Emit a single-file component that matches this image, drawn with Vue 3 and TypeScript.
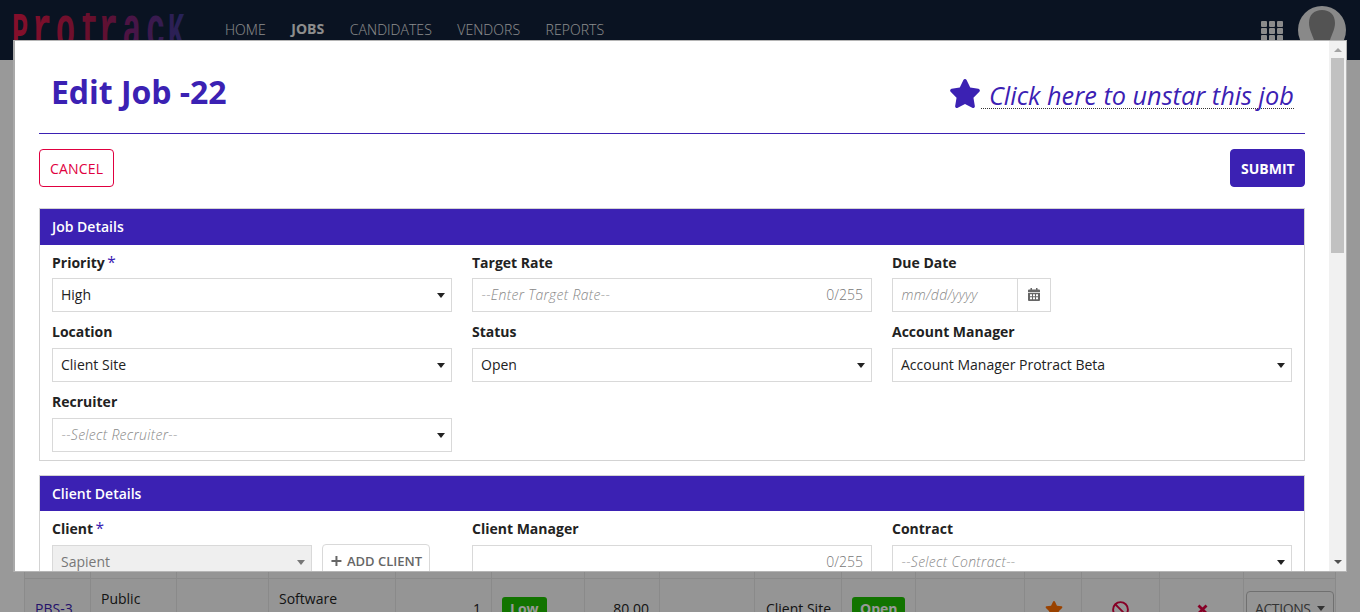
<script setup lang="ts">
interface Field {
  label: string
  kind: 'select' | 'text' | 'date' | 'client'
  value?: string
  placeholder?: string
  required?: boolean
}

interface Panel {
  title: string
  fields: Field[]
}

interface Cell {
  width: number
  kind?: 'link' | 'top' | 'right' | 'count' | 'badge' | 'star' | 'ban' | 'remove' | 'actions'
  text?: string
}

const navItems = ['HOME', 'JOBS', 'CANDIDATES', 'VENDORS', 'REPORTS']
const activeItem = 'JOBS'

const panels: Panel[] = [
  {
    title: 'Job Details',
    fields: [
      { label: 'Priority', kind: 'select', value: 'High', required: true },
      { label: 'Target Rate', kind: 'text', placeholder: '--Enter Target Rate--' },
      { label: 'Due Date', kind: 'date', placeholder: 'mm/dd/yyyy' },
      { label: 'Location', kind: 'select', value: 'Client Site' },
      { label: 'Status', kind: 'select', value: 'Open' },
      { label: 'Account Manager', kind: 'select', value: 'Account Manager Protract Beta' },
      { label: 'Recruiter', kind: 'select', placeholder: '--Select Recruiter--' },
    ],
  },
  {
    title: 'Client Details',
    fields: [
      { label: 'Client', kind: 'client', value: 'Sapient', required: true },
      { label: 'Client Manager', kind: 'text' },
      { label: 'Contract', kind: 'select', placeholder: '--Select Contract--' },
    ],
  },
]

const cells: Cell[] = [
  { width: 66, kind: 'link', text: 'PBS-3' },
  { width: 86, kind: 'top', text: 'Public' },
  { width: 92 },
  { width: 127, kind: 'top', text: 'Software' },
  { width: 96, kind: 'count', text: '1' },
  { width: 93, kind: 'badge', text: 'Low' },
  { width: 75, kind: 'right', text: '80.00' },
  { width: 95 },
  { width: 87, kind: 'right', text: 'Client Site' },
  { width: 74, kind: 'badge', text: 'Open' },
  { width: 109 },
  { width: 57, kind: 'star' },
  { width: 78, kind: 'ban' },
  { width: 84, kind: 'remove' },
  { width: 92, kind: 'actions', text: 'ACTIONS' },
]

const starPath =
  'M259.3 17.8 194 150.2 47.9 171.5c-26.2 3.8-36.7 36.1-17.7 54.6l105.7 103-25 145.5c-4.5 26.3 23.2 46 46.4 33.7L288 439.6l130.7 68.7c23.2 12.2 50.9-7.4 46.4-33.7l-25-145.5 105.7-103c19-18.5 8.500-50.8-17.7-54.6L382 150.200 316.700 17.800c-11.700-23.600-45.600-23.900-57.400 0z'
</script>

<template>
  <div class="page">
    <header class="nav">
      <svg class="logo" width="180" height="46" viewBox="0 0 180 46">
        <defs>
          <linearGradient id="logoFill" gradientUnits="userSpaceOnUse" x1="0" y1="0" x2="329" y2="0">
            <stop offset="0" stop-color="#e01a48" />
            <stop offset="0.5" stop-color="#a81a4c" />
            <stop offset="0.7" stop-color="#7a2377" />
            <stop offset="1" stop-color="#3d3a94" />
          </linearGradient>
        </defs>
        <text
          class="logo-text"
          transform="scale(0.52 1)"
          y="35"
          font-size="52"
          fill="url(#logoFill)"
          x="-2 37 82 129 165 210 256 298"
        ><tspan>P</tspan><tspan font-size="62">rotrac</tspan><tspan>K</tspan></text>
      </svg>
      <nav class="links">
        <a v-for="item in navItems" :key="item" :class="{ active: item === activeItem }">{{ item }}</a>
      </nav>
      <div class="tools">
        <span class="apps"><i v-for="n in 9" :key="n"></i></span>
        <svg width="48" height="48" viewBox="0 0 48 48">
          <circle cx="24" cy="24" r="24" fill="#e4e4e4" />
          <path d="M24 4c8 0 13 5 13 13 0 6-3 11-5 17-2 5-5 8-8 8s-6-3-8-8c-2-6-5-11-5-17C11 9 16 4 24 4z" fill="#8b8b8b" />
        </svg>
      </div>
    </header>

    <div class="table-row">
      <div
        v-for="(cell, i) in cells"
        :key="i"
        class="cell"
        :class="cell.kind"
        :style="{ width: cell.width + 'px' }"
      >
        <span v-if="cell.kind === 'badge'" class="tag">{{ cell.text }}</span>
        <svg v-else-if="cell.kind === 'star'" width="18" height="16" viewBox="0 0 576 512">
          <path :d="starPath" fill="#ff6e00" />
        </svg>
        <svg v-else-if="cell.kind === 'ban'" width="17" height="17" viewBox="0 0 17 17">
          <path d="M3 3l11 11" stroke="#e00040" stroke-width="1.8" />
          <circle cx="8.500" cy="8.500" r="7.400" fill="none" stroke="#e00040" stroke-width="1.900" />
        </svg>
        <svg v-else-if="cell.kind === 'remove'" width="11" height="11" viewBox="0 0 11 11">
          <path d="M1.500 1.500l8 8M9.500 1.500l-8 8" stroke="#e00040" stroke-width="2.800" />
        </svg>
        <span v-else-if="cell.kind === 'actions'" class="actions-btn">{{ cell.text }}<i class="caret"></i></span>
        <template v-else>{{ cell.text }}</template>
      </div>
    </div>

    <div class="overlay"></div>

    <section class="modal">
      <div class="content">
        <div class="heading">
          <h1>Edit Job -22</h1>
          <div class="star-toggle">
            <svg width="32" height="29" viewBox="0 0 576 512" preserveAspectRatio="none">
              <path :d="starPath" fill="#3b21b3" />
            </svg>
            <span class="hint">Click here to unstar this job</span>
          </div>
        </div>

        <div class="buttons">
          <button class="cancel">CANCEL</button>
          <button class="submit">SUBMIT</button>
        </div>

        <div v-for="panel in panels" :key="panel.title" class="panel">
          <h2>{{ panel.title }}</h2>
          <div class="fields">
            <div v-for="field in panel.fields" :key="field.label" class="field">
              <label>{{ field.label }}<span v-if="field.required" class="req">*</span></label>
              <div v-if="field.kind === 'client'" class="client-line">
                <div class="box disabled">
                  <span>{{ field.value }}</span><i class="caret"></i>
                </div>
                <button class="add">
                  <svg width="12" height="12" viewBox="0 0 12 12">
                    <path d="M6 .5v11M.5 6h11" stroke="#666" stroke-width="2.200" />
                  </svg>
                  ADD CLIENT
                </button>
              </div>
              <div v-else class="box" :class="field.kind">
                <span v-if="field.value">{{ field.value }}</span>
                <span v-else class="placeholder">{{ field.placeholder }}</span>
                <i v-if="field.kind === 'select'" class="caret"></i>
                <span v-if="field.kind === 'text'" class="counter">0/255</span>
                <span v-if="field.kind === 'date'" class="calendar">
                  <svg width="12" height="13" viewBox="0 0 12 13">
                    <path d="M2.500 0h1.500v1.500h4V0h1.500v1.500H11q1 0 1 1V4H0V2.500q0-1 1-1h1.500z" fill="#666" />
                    <path d="M0 4.700h12V12q0 1-1 1H1q-1 0-1-1z" fill="#666" />
                    <path d="M2 6.300h2v2H2zm3 0h2v2H5zm3 0h2v2H8zM2 9.300h2v2H2zm3 0h2v2H5zm3 0h2v2H8z" fill="#fff" />
                  </svg>
                </span>
              </div>
            </div>
          </div>
        </div>
      </div>
      <div class="scrollbar">
        <i class="up"></i>
        <span class="thumb"></span>
        <i class="down"></i>
      </div>
    </section>
  </div>
</template>

<style>
body {
  margin: 0;
  overflow: hidden;
}
</style>

<style scoped>
* {
  box-sizing: border-box;
}

.page {
  position: relative;
  display: flex;
  flex-direction: column;
  width: 1360px;
  height: 612px;
  overflow: hidden;
  background: #fff;
  color: #222;
  font: 400 14px/20px 'Open Sans', sans-serif;
}

.nav {
  display: flex;
  flex: none;
  height: 60px;
  padding: 0 14px 0 13px;
  background: #112039;
}

.logo {
  margin-top: 13px;
  flex: none;
  overflow: hidden;
}

.logo-text {
  font-family: 'Liberation Mono', monospace;
  font-weight: 700;
}

.links {
  display: flex;
  gap: 25.500px;
  padding: 20px 0 0 32px;
  color: #ececec;
  font-weight: 300;
  letter-spacing: 0.04px;
}

.links .active {
  margin-top: -1px;
  font-weight: 700;
}

.tools {
  display: flex;
  gap: 15px;
  margin-left: auto;
  padding-top: 6px;
}

.apps {
  display: grid;
  grid-template-columns: repeat(3, 6px);
  grid-auto-rows: 6px;
  gap: 1px 2px;
  margin-top: 15px;
}

.apps i {
  border-radius: 1px;
  background: #e8e8e8;
}

.table-row {
  display: flex;
  flex: none;
  width: 1312px;
  height: 64px;
  margin: 500px 0 0 24px;
  border-left: 1px solid #e8e8e8;
  background: #f9f9f9;
  box-shadow: inset 0 18px #f9f9f9, inset 0 19px #e6e6e6;
}

.cell {
  display: flex;
  align-items: center;
  flex: none;
  padding: 34px 10px 0;
  border-right: 1px solid #e6e6e6;
  white-space: nowrap;
}

.link {
  color: #3b21b3;
}

.top {
  align-items: flex-start;
  padding-top: 29px;
}

.right,
.count {
  justify-content: flex-end;
}

.star,
.ban,
.remove {
  justify-content: center;
}

.star,
.remove {
  padding-left: 11px;
}

.tag {
  height: 24px;
  padding: 2px 8px;
  border-radius: 3px;
  background: #1ec200;
  color: #fff;
  font-weight: 700;
}

.actions {
  padding: 33px 2px 0;
}

.actions-btn {
  display: flex;
  align-items: center;
  gap: 6px;
  height: 36px;
  padding: 0 8px;
  border: 1px solid #bbb;
  border-radius: 4px;
  color: #555;
  letter-spacing: -0.4px;
}

.actions-btn .caret {
  border-top-color: #555;
}

.overlay {
  position: absolute;
  inset: 0;
  background: rgba(0, 0, 0, 0.4);
}

.modal {
  position: absolute;
  left: 13px;
  top: 40px;
  display: flex;
  width: 1334px;
  height: 532px;
  overflow: hidden;
  border: 1px solid #b5b5b5;
  border-left: 2px solid #a9a9a9;
  background: #fff;
}

.content {
  width: 1290px;
  margin-left: 24px;
  padding-right: 24px;
  flex: none;
}

.heading {
  display: flex;
  justify-content: space-between;
  height: 93px;
  padding: 0 11px 0 12px;
  border-bottom: 1px solid #3b21b3;
}

h1 {
  margin: 30px 0 0;
  color: #3b21b3;
  font-size: 32px;
  font-weight: 700;
  line-height: 41px;
  letter-spacing: -0.05px;
}

.star-toggle {
  display: flex;
  margin-top: 37px;
}

.star-toggle svg {
  margin-top: 1px;
}

.hint {
  width: 313px;
  height: 31px;
  padding-left: 8px;
  border-bottom: 1px dotted #333;
  color: #3b21b3;
  font-size: 25.300px;
  font-style: italic;
  font-weight: 400;
  line-height: 35px;
  white-space: nowrap;
}

.buttons {
  display: flex;
  justify-content: space-between;
  padding: 15px 0 21px;
}

button {
  height: 38px;
  padding: 1px 10px 0;
  border-radius: 4px;
  font: 400 14px/20px 'Open Sans', sans-serif;
}

.cancel {
  width: 75px;
  border: 1px solid #e00040;
  background: #fff;
  color: #e00040;
  letter-spacing: 0.2px;
}

.submit {
  width: 75px;
  border: 1px solid #3b21b3;
  background: #3b21b3;
  color: #fff;
  font-weight: 700;
}

.panel {
  height: 253px;
  margin-bottom: 14px;
  border: 1px solid #d3d3d3;
}

h2 {
  height: 36px;
  margin: 0;
  padding-left: 12px;
  background: #3b21b3;
  color: #fff;
  font-size: 14px;
  font-weight: 600;
  line-height: 36px;
}

.panel + .panel h2 {
  height: 35px;
  line-height: 35px;
}

.fields {
  display: grid;
  grid-template-columns: repeat(3, 400px);
  column-gap: 20px;
  grid-auto-rows: 70px;
  padding-left: 12px;
}

.field {
  padding-top: 8px;
}

.field:nth-child(n + 4) {
  padding-top: 7px;
}

.field:nth-child(n + 4) label,
.panel + .panel label {
  height: 26px;
}

label {
  display: block;
  height: 25px;
  font-weight: 700;
}

.req {
  margin-left: 2.500px;
  color: #3b21b3;
  font-size: 15.500px;
  font-weight: 400;
  line-height: 18px;
}

.box {
  display: flex;
  align-items: center;
  justify-content: space-between;
  height: 34px;
  padding: 0 6px 0 8px;
  border: 1px solid #d9d9d9;
  background: #fff;
}

.placeholder {
  padding-left: 0.500px;
  color: #888;
  font-style: italic;
  font-weight: 300;
  letter-spacing: 0.3px;
}

.counter {
  margin-right: 2px;
  color: #777;
  font-weight: 350;
}

.caret {
  width: 0;
  height: 0;
  border: 4.500px solid transparent;
  border-top: 5px solid #222;
  border-bottom: 0;
}

.date {
  width: 159px;
  padding-right: 0;
}

.calendar {
  display: flex;
  align-items: center;
  justify-content: center;
  width: 33px;
  height: 32px;
  padding-bottom: 1px;
  border-left: 1px solid #d9d9d9;
}

.client-line {
  display: flex;
  gap: 10px;
}

.disabled {
  width: 260px;
  background: #efefef;
  color: #777;
}

.disabled .caret {
  border-top-color: #777;
}

.add {
  display: flex;
  align-items: center;
  gap: 5px;
  width: 108px;
  height: 36px;
  margin-top: -1px;
  padding: 0 7px 2px 8px;
  border: 1px solid #d9d9d9;
  background: #fff;
  color: #666;
  font-size: 13px;
  font-weight: 600;
  white-space: nowrap;
}

.scrollbar {
  display: flex;
  flex-direction: column;
  align-items: center;
  width: 17px;
  height: 530px;
  padding: 7px 0;
  flex: none;
  background: #f1f1f1;
}

.up,
.down {
  width: 0;
  height: 0;
  border: 4px solid transparent;
}

.up {
  border-top: 0;
  border-bottom-color: #a3a3a3;
}

.thumb {
  width: 13px;
  height: 195px;
  margin-top: 6px;
  background: #c1c1c1;
}

.down {
  margin-top: auto;
  border-top-color: #505050;
  border-bottom: 0;
}
</style>
